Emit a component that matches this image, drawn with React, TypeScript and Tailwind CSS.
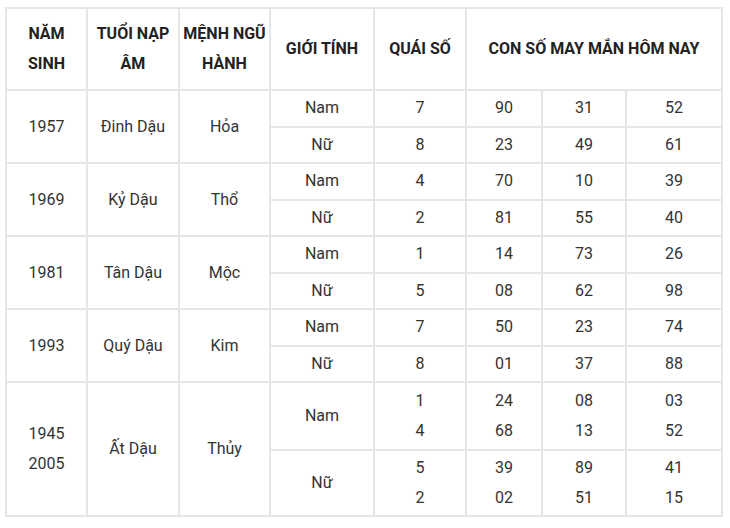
const rows = [
  { year: ["1957"], tuoi: "Đinh Dậu", menh: "Hỏa", nam: { q: ["7"], n: [["90", "31", "52"]] }, nu: { q: ["8"], n: [["23", "49", "61"]] } },
  { year: ["1969"], tuoi: "Kỷ Dậu", menh: "Thổ", nam: { q: ["4"], n: [["70", "10", "39"]] }, nu: { q: ["2"], n: [["81", "55", "40"]] } },
  { year: ["1981"], tuoi: "Tân Dậu", menh: "Mộc", nam: { q: ["1"], n: [["14", "73", "26"]] }, nu: { q: ["5"], n: [["08", "62", "98"]] } },
  { year: ["1993"], tuoi: "Quý Dậu", menh: "Kim", nam: { q: ["7"], n: [["50", "23", "74"]] }, nu: { q: ["8"], n: [["01", "37", "88"]] } },
  {
    year: ["1945", "2005"],
    tuoi: "Ất Dậu",
    menh: "Thủy",
    nam: { q: ["1", "4"], n: [["24", "08", "03"], ["68", "13", "52"]] },
    nu: { q: ["5", "2"], n: [["39", "89", "41"], ["02", "51", "15"]] },
  },
];

const cell = "border-2 border-[#e6e6e6] text-center align-middle px-1 leading-[30px]";
const head = "border-2 border-[#e6e6e6] text-center align-middle px-0 leading-[30px] whitespace-nowrap";

function Lines({ items }: { items: string[] }) {
  return (
    <>
      {items.map((t, i) => (
        <div key={i}>{t}</div>
      ))}
    </>
  );
}

export default function App() {
  return (
    <div className="bg-white w-[730px] h-[528px] pl-[5px] pt-[7px]" style={{ fontFamily: "Roboto, 'Liberation Sans', sans-serif" }}>
      <table className="table-fixed border-collapse w-[716px] text-[16px] text-[#333]">
        <colgroup>
          <col className="w-[81px]" />
          <col className="w-[92px]" />
          <col className="w-[91px]" />
          <col className="w-[104px]" />
          <col className="w-[92px]" />
          <col className="w-[76px]" />
          <col className="w-[84px]" />
          <col className="w-[96px]" />
        </colgroup>
        <thead>
          <tr className="h-[82px] font-bold text-[#222]">
            <th className={head}>NĂM<br />SINH</th>
            <th className={head}>TUỔI NẠP<br />ÂM</th>
            <th className={head}>MỆNH NGŨ<br />HÀNH</th>
            <th className={head}>GIỚI TÍNH</th>
            <th className={head}>QUÁI SỐ</th>
            <th className={head} colSpan={3}>CON SỐ MAY MẮN HÔM NAY</th>
          </tr>
        </thead>
        <tbody>
          {rows.map((r, i) => {
            const multi = r.year.length > 1;
            const ha = multi ? "h-[68px]" : "h-[36.5px]";
            const hb = multi ? "h-[66px]" : "h-[36.5px]";
            return [
              <tr key={i + "a"} className={ha}>
                <td className={cell} rowSpan={2}>
                  <Lines items={r.year} />
                </td>
                <td className={cell} rowSpan={2}>{r.tuoi}</td>
                <td className={cell} rowSpan={2}>{r.menh}</td>
                <td className={cell}>Nam</td>
                <td className={cell}>
                  <Lines items={r.nam.q} />
                </td>
                {[0, 1, 2].map((c) => (
                  <td key={c} className={cell}>
                    <Lines items={r.nam.n.map((x) => x[c])} />
                  </td>
                ))}
              </tr>,
              <tr key={i + "b"} className={hb}>
                <td className={cell}>Nữ</td>
                <td className={cell}>
                  <Lines items={r.nu.q} />
                </td>
                {[0, 1, 2].map((c) => (
                  <td key={c} className={cell}>
                    <Lines items={r.nu.n.map((x) => x[c])} />
                  </td>
                ))}
              </tr>,
            ];
          })}
        </tbody>
      </table>
    </div>
  );
}
